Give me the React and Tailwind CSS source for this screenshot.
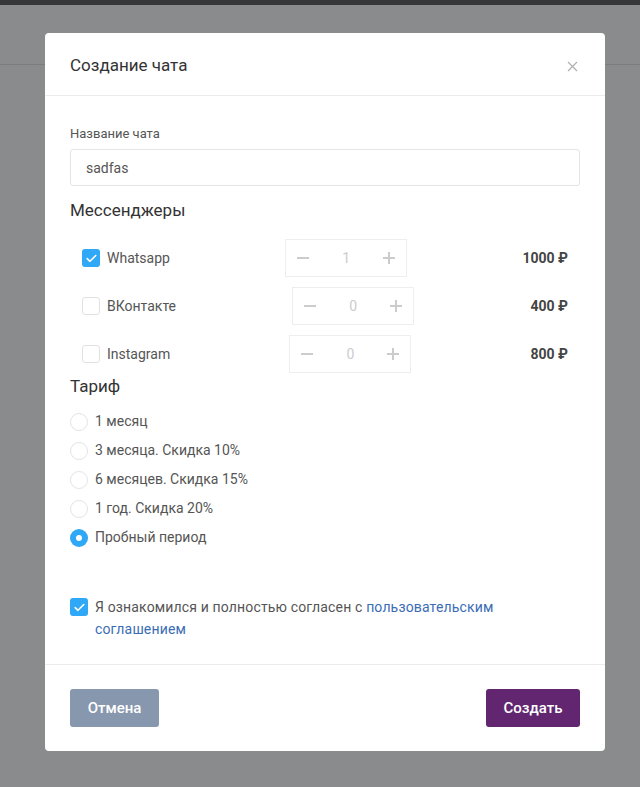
import React, { useState } from 'react'

const messengers = [
  { id: 'wa', name: 'Whatsapp', count: 1, price: '1000 ₽' },
  { id: 'vk', name: 'ВКонтакте', count: 0, price: '400 ₽' },
  { id: 'ig', name: 'Instagram', count: 0, price: '800 ₽' },
]

const tariffs = [
  '1 месяц',
  '3 месяца. Скидка 10%',
  '6 месяцев. Скидка 15%',
  '1 год. Скидка 20%',
  'Пробный период',
]

const CheckBox = ({ checked, onChange }) => (
  <button
    type="button"
    onClick={onChange}
    className={`w-[18px] h-[18px] shrink-0 rounded-[3px] flex items-center justify-center ${
      checked ? 'bg-[#2fa8f7]' : 'bg-white border border-[#e2e2e2]'
    }`}
  >
    {checked && (
      <svg width="11" height="9" viewBox="0 0 11 9" fill="none">
        <path d="M1.2 4.6 4 7.3 9.8 1.5" stroke="#fff" strokeWidth="1.6" strokeLinecap="round" strokeLinejoin="round" />
      </svg>
    )}
  </button>
)

const Radio = ({ checked }) => (
  <span
    className={`w-[18px] h-[18px] shrink-0 rounded-full flex items-center justify-center ${
      checked ? 'bg-[#2fa8f7]' : 'bg-white border border-[#e4e4e4]'
    }`}
  >
    {checked && <span className="w-[6px] h-[6px] rounded-full bg-white" />}
  </span>
)

const Stepper = ({ value }) => (
  <div className="w-[122px] h-[38px] border border-[#eeeeee] flex items-center justify-between px-[10px]">
    <svg width="14" height="14" viewBox="0 0 14 14">
      <path d="M1 7h12" stroke="#cccccc" strokeWidth="2" />
    </svg>
    <span className="text-[14px] text-[#cccccc]">{value}</span>
    <svg width="14" height="14" viewBox="0 0 14 14">
      <path d="M1 7h12M7 1v12" stroke="#cccccc" strokeWidth="2" />
    </svg>
  </div>
)

export default function App() {
  const [name, setName] = useState('sadfas')
  const [selected, setSelected] = useState({ wa: true, vk: false, ig: false })
  const [tariff, setTariff] = useState(4)
  const [agree, setAgree] = useState(true)

  return (
    <div className="relative h-[787px] bg-[#8a8b8d] font-['Roboto',sans-serif] overflow-hidden">
      <div className="h-[5px] bg-[#363738]" />
      <div className="h-[60px] border-b border-[#7b7c7e]" />

      <div className="absolute inset-0 pt-[33px] pl-[45px]">
        <div className="w-[560px] bg-white rounded-[4px]">
          <div className="h-[63px] px-[25px] flex items-center justify-between border-b border-[#ececec]">
            <h2 className="mt-[3px] text-[17px] text-[#333]">Создание чата</h2>
            <button type="button" className="mr-[2px] mt-[5px]">
              <svg width="11" height="11" viewBox="0 0 11 11">
                <path d="M1 1l9 9M10 1l-9 9" stroke="#b0b0b0" strokeWidth="1.2" />
              </svg>
            </button>
          </div>

          <div className="px-[25px] pt-[29px] pb-[24px]">
            <label className="block text-[13px] leading-[18px] text-[#555]">Название чата</label>
            <input
              value={name}
              onChange={(e) => setName(e.target.value)}
              className="mt-[6px] w-full h-[37px] border border-[#e4e4e4] rounded-[3px] px-[15px] text-[14px] text-[#555] outline-none"
            />

            <h3 className="mt-[12px] text-[17px] leading-[24px] text-[#333]">Мессенджеры</h3>
            <div className="mt-[17px] px-[12px] flex flex-col gap-[10px]">
              {messengers.map((m) => (
                <div key={m.id} className="h-[38px] flex items-center justify-between">
                  <div className="flex items-center gap-[7px]">
                    <CheckBox
                      checked={selected[m.id]}
                      onChange={() => setSelected({ ...selected, [m.id]: !selected[m.id] })}
                    />
                    <span className="text-[14px] text-[#555]">{m.name}</span>
                  </div>
                  <Stepper value={m.count} />
                  <span className="text-[14px] font-bold text-[#444]">{m.price}</span>
                </div>
              ))}
            </div>

            <h3 className="mt-[1px] text-[17px] leading-[24px] text-[#333]">Тариф</h3>
            <div className="mt-[9px] flex flex-col">
              {tariffs.map((t, i) => (
                <label
                  key={t}
                  onClick={() => setTariff(i)}
                  className="h-[29px] flex items-center gap-[7px] cursor-pointer"
                >
                  <Radio checked={tariff === i} />
                  <span className="text-[14px] text-[#555]">{t}</span>
                </label>
              ))}
            </div>

            <div className="mt-[44px] flex items-start gap-[7px]">
              <div className="pt-[2px]">
                <CheckBox checked={agree} onChange={() => setAgree(!agree)} />
              </div>
              <p className="max-w-[420px] text-[14px] leading-[22px] tracking-[0.15px] text-[#555]">
                Я ознакомился и полностью согласен с{' '}
                <a href="#" className="text-[#3a6db5]">
                  пользовательским соглашением
                </a>
              </p>
            </div>
          </div>

          <div className="border-t border-[#ececec] px-[25px] pt-[24px] pb-[24px] flex items-center justify-between">
            <button type="button" className="h-[38px] w-[89px] rounded-[3px] bg-[#8797ad] text-white text-[15px] font-medium">
              Отмена
            </button>
            <button type="button" className="h-[38px] w-[94px] rounded-[3px] bg-[#62256f] text-white text-[15px] font-medium">
              Создать
            </button>
          </div>
        </div>
      </div>
    </div>
  )
}
